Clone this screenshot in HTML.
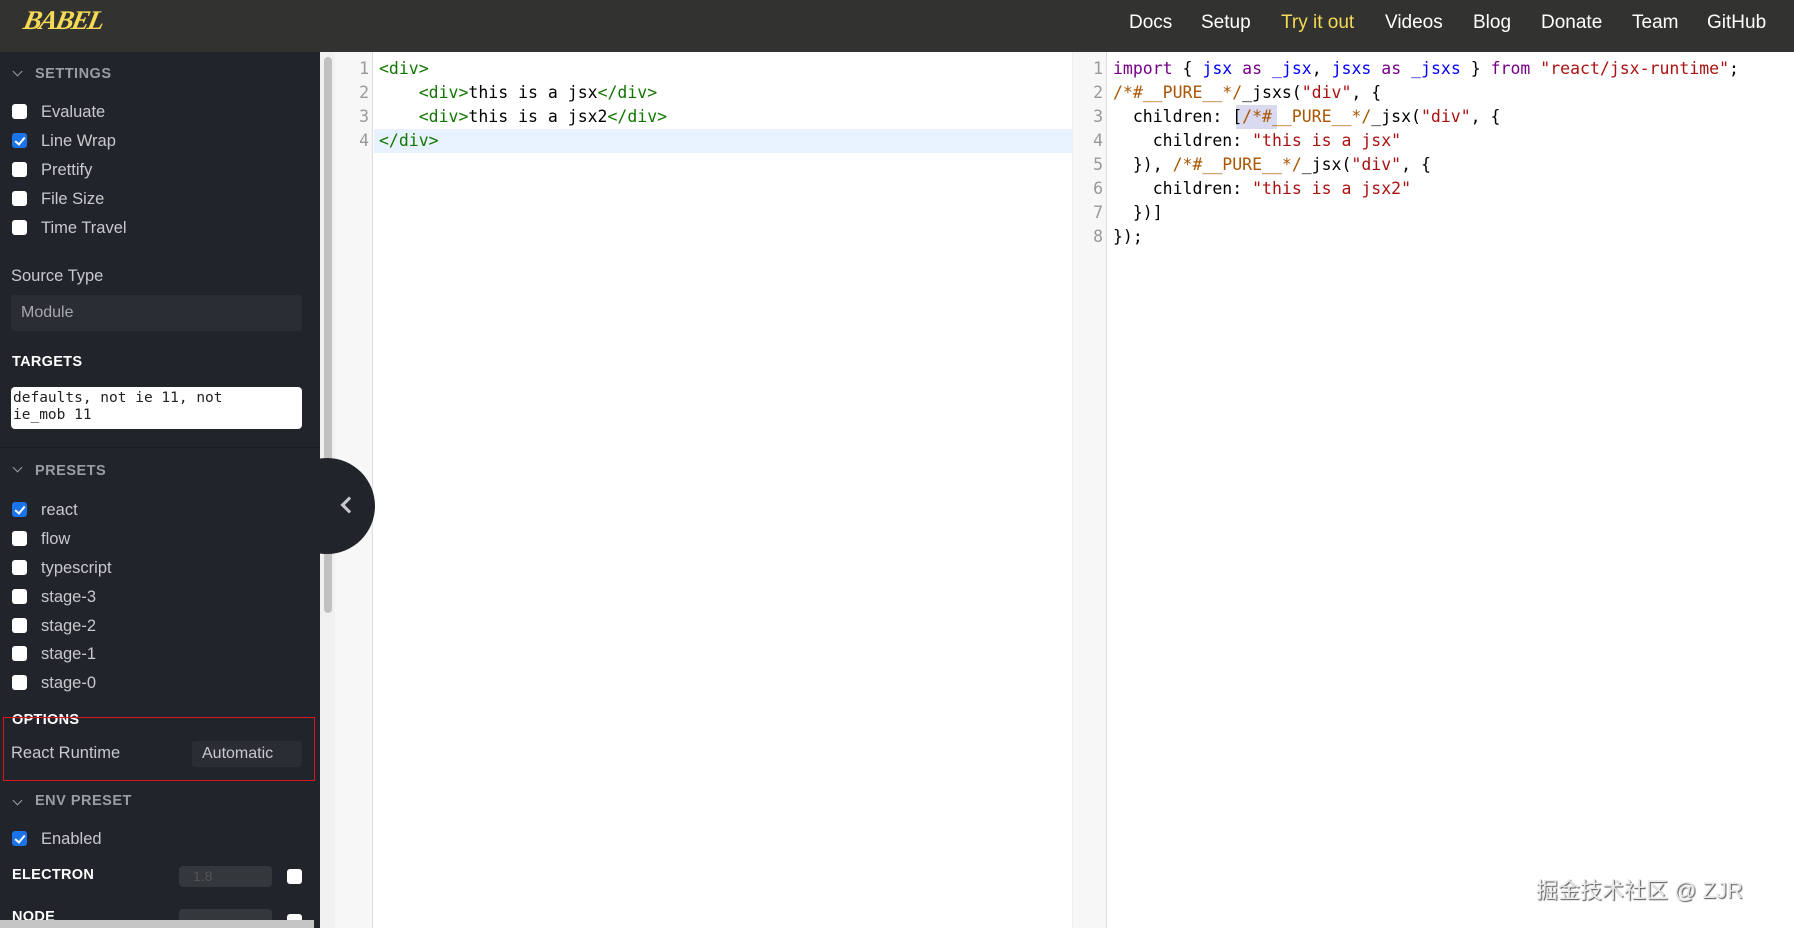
<!DOCTYPE html>
<html><head><meta charset="utf-8">
<style>
*{box-sizing:border-box;margin:0;padding:0}
body{width:1794px;height:928px;overflow:hidden;background:#fff;font-family:"Liberation Sans",sans-serif;position:relative}
.hdr{position:absolute;left:0;top:0;width:1794px;height:52px;background:#323330}
.logo{position:absolute;left:24px;top:5px;color:#f5da55;font:italic bold 27px "Liberation Serif",serif;letter-spacing:-2px;transform:skewX(-12deg)}
.nav{position:absolute;top:12px;color:#fff;font-size:19px}
.side{position:absolute;left:0;top:52px;width:320px;height:876px;background:#21242a;color:#c7c9cc;overflow:hidden}
.a{position:absolute}
.h{font-size:14.5px;font-weight:bold;letter-spacing:.5px;color:#9a9da2}
.t{font-size:14.5px;font-weight:bold;color:#fff;letter-spacing:.3px}
.cb{position:absolute;left:12px;width:15px;height:15px;background:#fff;border-radius:3px}
.cb.on{background:#1a73e8}
.cb.on::after{content:"";position:absolute;left:4.5px;top:1.5px;width:4px;height:8px;border:solid #fff;border-width:0 2.5px 2.5px 0;transform:rotate(40deg)}
.lb{position:absolute;left:41px;font-size:16.5px;color:#c7c9cc}
.chev{position:absolute;left:14px;width:7px;height:7px;border:solid #9a9da2;border-width:0 1.5px 1.5px 0;transform:rotate(45deg)}
.code{font-family:"DejaVu Sans Mono",monospace;font-size:16.5px;white-space:pre;position:absolute;line-height:24px}
.ln{position:absolute;font-family:"DejaVu Sans Mono",monospace;font-size:16.5px;color:#999;line-height:24px;text-align:right}
.g{color:#117700}.k{color:#770088}.v{color:#0000ff}.s{color:#aa1111}.c{color:#aa5500}
</style></head><body>
<div class="hdr">
<div class="logo">BABEL</div>
<span class="nav" style="left:1129px">Docs</span>
<span class="nav" style="left:1201px">Setup</span>
<span class="nav" style="left:1281px;color:#f5da55">Try it out</span>
<span class="nav" style="left:1385px">Videos</span>
<span class="nav" style="left:1473px">Blog</span>
<span class="nav" style="left:1541px">Donate</span>
<span class="nav" style="left:1632px">Team</span>
<span class="nav" style="left:1707px">GitHub</span>
</div>

<div class="side">
<div class="chev" style="top:16px"></div><div class="a h" style="left:35px;top:14px">SETTINGS</div>
<div class="cb" style="top:52px"></div><div class="lb" style="top:51px">Evaluate</div>
<div class="cb on" style="top:81px"></div><div class="lb" style="top:80px">Line Wrap</div>
<div class="cb" style="top:110px"></div><div class="lb" style="top:109px">Prettify</div>
<div class="cb" style="top:139px"></div><div class="lb" style="top:138px">File Size</div>
<div class="cb" style="top:168px"></div><div class="lb" style="top:167px">Time Travel</div>
<div class="a" style="left:11px;top:215px;font-size:16.5px">Source Type</div>
<div class="a" style="left:11px;top:243px;width:291px;height:36px;background:#2a2d33;border-radius:3px;color:#a7a9ac;font-size:16px;padding:9px 10px">Module</div>
<div class="a t" style="left:12px;top:302px">TARGETS</div>
<div class="a" style="left:11px;top:335px;width:291px;height:42px;background:#fff;border-radius:4px;color:#222;font:14.5px/17px 'DejaVu Sans Mono',monospace;padding:3px 2px">defaults, not ie 11, not<br>ie_mob 11</div>
<div class="a" style="left:0;top:395px;width:320px;height:1px;background:#1a1c20"></div>
<div class="chev" style="top:412px"></div><div class="a h" style="left:35px;top:411px">PRESETS</div>
<div class="cb on" style="top:450px"></div><div class="lb" style="top:449px">react</div>
<div class="cb" style="top:479px"></div><div class="lb" style="top:478px">flow</div>
<div class="cb" style="top:508px"></div><div class="lb" style="top:507px">typescript</div>
<div class="cb" style="top:537px"></div><div class="lb" style="top:536px">stage-3</div>
<div class="cb" style="top:566px"></div><div class="lb" style="top:565px">stage-2</div>
<div class="cb" style="top:594px"></div><div class="lb" style="top:593px">stage-1</div>
<div class="cb" style="top:623px"></div><div class="lb" style="top:622px">stage-0</div>
<div class="a t" style="left:12px;top:660px">OPTIONS</div>
<div class="a" style="left:11px;top:692px;font-size:16.5px">React Runtime</div>
<div class="a" style="left:192px;top:689px;width:110px;height:26px;background:#2a2d33;border-radius:3px;color:#c7c9cc;font-size:16px;padding:4px 10px">Automatic</div>
<div class="a" style="left:3px;top:665px;width:312px;height:64px;border:1.5px solid #d7161e"></div>
<div class="chev" style="top:745px"></div><div class="a h" style="left:35px;top:741px">ENV PRESET</div>
<div class="cb on" style="top:779px"></div><div class="lb" style="top:778px">Enabled</div>
<div class="a t" style="left:12px;top:815px">ELECTRON</div>
<div class="a" style="left:179px;top:814px;width:93px;height:21px;background:#34373c;border-radius:4px;color:#555;font-size:14px;padding:2px 14px">1.8</div>
<div class="cb" style="left:287px;top:817px"></div>
<div class="a t" style="left:12px;top:857px">NODE</div>
<div class="a" style="left:179px;top:857px;width:93px;height:21px;background:#34373c;border-radius:4px"></div>
<div class="cb" style="left:287px;top:862px"></div>
<div class="a" style="left:0;top:868px;width:314px;height:8px;background:#c5c5c5"></div>
</div>

<div class="a" style="left:320px;top:52px;width:15px;height:876px;background:#f1f1f1"></div>
<div class="a" style="left:324px;top:57px;width:8px;height:556px;background:#c1c1c1;border-radius:4px"></div>

<div class="a" style="left:335px;top:52px;width:38px;height:876px;background:#f7f7f7;border-right:1px solid #ddd"></div>
<div class="a" style="left:374px;top:129px;width:698px;height:24px;background:#e8f2ff"></div>
<div class="ln" style="left:335px;top:57px;width:34px">1<br>2<br>3<br>4</div>
<div class="code" style="left:379px;top:57px"><span class="g">&lt;div&gt;</span>
    <span class="g">&lt;div&gt;</span>this is a jsx<span class="g">&lt;/div&gt;</span>
    <span class="g">&lt;div&gt;</span>this is a jsx2<span class="g">&lt;/div&gt;</span>
<span class="g">&lt;/div&gt;</span></div>

<div class="a" style="left:1072px;top:52px;width:35px;height:876px;background:#f7f7f7;border-left:1px solid #eee;border-right:1px solid #ddd"></div>
<div class="ln" style="left:1072px;top:57px;width:31px">1<br>2<br>3<br>4<br>5<br>6<br>7<br>8</div>
<div class="a" style="left:1236px;top:105px;width:41px;height:24px;background:#d9d9f0"></div>
<div class="code" style="left:1113px;top:57px;color:#000"><span class="k">import</span> { <span class="v">jsx</span> <span class="k">as</span> <span class="v">_jsx</span>, <span class="v">jsxs</span> <span class="k">as</span> <span class="v">_jsxs</span> } <span class="k">from</span> <span class="s">"react/jsx-runtime"</span>;
<span class="c">/*#__PURE__*/</span>_jsxs(<span class="s">"div"</span>, {
  children: [<span class="c">/*#__PURE__*/</span>_jsx(<span class="s">"div"</span>, {
    children: <span class="s">"this is a jsx"</span>
  }), <span class="c">/*#__PURE__*/</span>_jsx(<span class="s">"div"</span>, {
    children: <span class="s">"this is a jsx2"</span>
  })]
});</div>

<div class="a" style="left:279px;top:458px;width:96px;height:96px;border-radius:50%;background:#21242a"></div>
<div class="a" style="left:343px;top:499px;width:12px;height:12px;border:solid #c7c9cc;border-width:0 0 3px 3px;transform:rotate(45deg)"></div>

<div class="a" style="left:1536px;top:873px;font:22px 'Liberation Sans','Noto Sans CJK SC',sans-serif;color:#e8e8e8;text-shadow:1px 1px 1px #555,-1px -1px 0 #fff">掘金技术社区 @ ZJR</div>
</body></html>
